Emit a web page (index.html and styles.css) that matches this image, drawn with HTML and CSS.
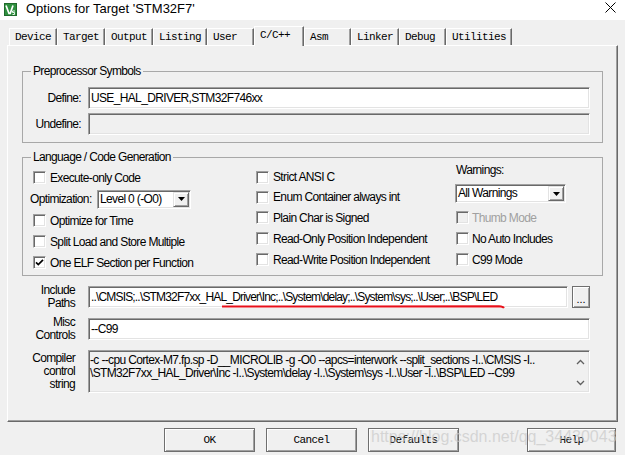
FILE: index.html
```html
<!DOCTYPE html>
<html lang="en">
<head>
<meta charset="utf-8">
<title>Options for Target 'STM32F7'</title>
<link rel="stylesheet" href="styles.css">
</head>
<body>
<div class="window">
  <div class="titlebar">
    <svg class="appicon" width="13" height="13" viewBox="0 0 13 13">
      <rect x="0" y="0" width="13" height="13" fill="#2f8f3f"/>
      <rect x="0.5" y="0.5" width="12" height="12" fill="none" stroke="#1f6a2b"/>
      <path d="M2 2.5 L5 10.5 L6.2 10.5 L9 2.5" fill="none" stroke="#fff" stroke-width="1.7"/>
      <path d="M8.5 8 H11 M8.5 8 V9.5 H10.5 V11.5 H8.5" fill="none" stroke="#fff" stroke-width="0.9"/>
    </svg>
    <span class="title">Options for Target 'STM32F7'</span>
    <svg class="close" width="11" height="11" viewBox="0 0 11 11">
      <path d="M0.5 0.5 L10.5 10.5 M10.5 0.5 L0.5 10.5" stroke="#000" stroke-width="1" fill="none"/>
    </svg>
  </div>

  <div class="tabs">
    <div class="tab">Device</div>
    <div class="tab">Target</div>
    <div class="tab">Output</div>
    <div class="tab">Listing</div>
    <div class="tab">User</div>
    <div class="tab active">C/C++</div>
    <div class="tab">Asm</div>
    <div class="tab">Linker</div>
    <div class="tab">Debug</div>
    <div class="tab">Utilities</div>
  </div>

  <div class="panel">
    <fieldset class="group pre">
      <legend>Preprocessor Symbols</legend>
      <div class="form">
        <label class="lbl">Define:</label>
        <div class="edit">USE_HAL_DRIVER,STM32F746xx</div>
        <label class="lbl">Undefine:</label>
        <div class="edit disabled"></div>
      </div>
    </fieldset>

    <fieldset class="group lang">
      <legend>Language / Code Generation</legend>
      <div class="cols">
        <div class="col col1">
          <div class="chk"><span class="box"></span>Execute-only Code</div>
          <div class="optrow">
            <span class="optlabel">Optimization:</span>
            <div class="combo optcombo">
              <span class="val">Level 0 (-O0)</span>
              <span class="drop"><svg width="7" height="4" viewBox="0 0 7 4"><path d="M0 0 H7 L3.5 4 Z" fill="#000"/></svg></span>
            </div>
          </div>
          <div class="chk"><span class="box"></span>Optimize for Time</div>
          <div class="chk"><span class="box"></span>Split Load and Store Multiple</div>
          <div class="chk"><span class="box"><svg width="9" height="9" viewBox="0 0 9 9"><path d="M1 4.3 L3.3 6.6 L8 1.8" fill="none" stroke="#000" stroke-width="1.7"/></svg></span>One ELF Section per Function</div>
        </div>
        <div class="col col2">
          <div class="chk short"><span class="box"></span>Strict ANSI C</div>
          <div class="chk short"><span class="box"></span>Enum Container always int</div>
          <div class="chk"><span class="box"></span>Plain Char is Signed</div>
          <div class="chk"><span class="box"></span>Read-Only Position Independent</div>
          <div class="chk"><span class="box"></span>Read-Write Position Independent</div>
        </div>
        <div class="col col3">
          <div class="wlabel">Warnings:</div>
          <div class="combo warncombo">
            <span class="val">All Warnings</span>
            <span class="drop"><svg width="7" height="4" viewBox="0 0 7 4"><path d="M0 0 H7 L3.5 4 Z" fill="#000"/></svg></span>
          </div>
          <div class="chk disabled first"><span class="box"></span>Thumb Mode</div>
          <div class="chk"><span class="box"></span>No Auto Includes</div>
          <div class="chk"><span class="box"></span>C99 Mode</div>
        </div>
      </div>
    </fieldset>

    <div class="paths">
      <div class="plabel">Include<br>Paths</div>
      <div class="inc">
        <div class="edit tight">..\CMSIS;..\STM32F7xx_HAL_Driver\Inc;..\System\delay;..\System\sys;..\User;..\BSP\LED</div>
        <div class="browse">...</div>
      </div>
      <div class="plabel">Misc<br>Controls</div>
      <div class="edit">--C99</div>
      <div class="plabel">Compiler<br>control<br>string</div>
      <div class="memo">
        <div class="memo-text">-c --cpu Cortex-M7.fp.sp -D__MICROLIB -g -O0 --apcs=interwork --split_sections -I..\CMSIS -I..<br>\STM32F7xx_HAL_Driver\Inc -I..\System\delay -I..\System\sys -I..\User -I..\BSP\LED --C99</div>
        <div class="vscroll">
          <svg width="9" height="6" viewBox="0 0 9 6"><path d="M1 5 L4.5 1.5 L8 5" fill="none" stroke="#606060" stroke-width="1.3"/></svg>
          <svg width="9" height="6" viewBox="0 0 9 6"><path d="M1 1 L4.5 4.5 L8 1" fill="none" stroke="#606060" stroke-width="1.3"/></svg>
        </div>
      </div>
    </div>
  </div>

  <div class="buttons">
    <button class="btn">OK</button>
    <button class="btn">Cancel</button>
    <button class="btn">Defaults</button>
    <button class="btn help">Help</button>
  </div>

  <svg class="annotation" width="625" height="455" viewBox="0 0 625 455">
    <path d="M222 306.5 C 300 307.3, 420 306, 499 306.3 Q 503 306.6 504 308" fill="none" stroke="#e8101a" stroke-width="2"/>
  </svg>
  <div class="watermark">https://blog.csdn.net/qq_34430043</div>
</div>
</body>
</html>
```

FILE: styles.css
```css
* { box-sizing: border-box; }
html, body { margin: 0; padding: 0; }
body {
  width: 625px;
  height: 455px;
  overflow: hidden;
  background: #f0f0f0;
  font-family: "Liberation Sans", Arial, sans-serif;
  font-size: 12px;
  letter-spacing: -0.65px;
  color: #000;
}
.window { position: relative; width: 625px; height: 455px; }

/* title bar */
.titlebar {
  height: 20px;
  background: #fff;
  display: flex;
  align-items: center;
  padding-left: 4px;
}
.appicon { display: block; margin-right: 9px; margin-top: -2px; }
.title {
  font-size: 13px;
  letter-spacing: 0;
  line-height: 20px;
  margin-top: -2px;
}
.close { display: block; margin-left: auto; margin-right: 9px; margin-top: -5px; }

/* tabs */
.tabs {
  height: 25px;
  display: flex;
  align-items: flex-end;
  padding-left: 9px;
  font-family: "Liberation Mono", "Courier New", monospace;
  font-size: 11px;
  letter-spacing: -0.6px;
}
.tab {
  height: 17px;
  min-width: 47px;
  padding: 2px 5px 0 5px;
  line-height: 13px;
  border-top: 1px solid #fff;
  border-left: 1px solid #fff;
  border-right: 1px solid #696969;
  box-shadow: inset -1px 0 0 #a0a0a0;
  white-space: nowrap;
}
.tab.active {
  height: 20px;
  min-width: 50px;
  margin-bottom: -1px;
  position: relative;
  z-index: 1;
  background: #f0f0f0;
  padding-top: 2px;
}

/* tab page */
.panel {
  margin-left: 7px;
  width: 611px;
  height: 377px;
  border-top: 1px solid #fff;
  border-left: 1px solid #fff;
  border-right: 1px solid #696969;
  border-bottom: 1px solid #696969;
  box-shadow: inset -1px -1px 0 #a0a0a0;
  padding-top: 18px;
}

.group {
  margin: 0 0 0 14px;
  width: 581px;
  padding: 0;
  border: 1px solid #a8a8a8;
  min-width: 0;
}
.group legend {
  margin-left: 8px;
  padding: 0 2px;
  line-height: 14px;
}
.lang { margin-top: 7px; }

.form {
  display: grid;
  grid-template-columns: 58px 502px;
  grid-auto-rows: 22px;
  column-gap: 7px;
  row-gap: 4px;
  padding: 9px 0 7px 0;
}
.lbl { text-align: right; align-self: center; }

.edit {
  height: 22px;
  background: #fff;
  border: 1px solid;
  border-color: #a0a0a0 #fff #fff #a0a0a0;
  box-shadow: inset 1px 1px 0 #696969, inset -1px -1px 0 #e3e3e3;
  padding: 0 0 0 2px;
  line-height: 20px;
  white-space: nowrap;
  overflow: hidden;
}
.edit.tight { letter-spacing: -0.83px; }
.edit.disabled { background: #f0f0f0; }

/* language group */
.cols { display: flex; padding: 3px 0 2px 7px; }
.col { display: flex; flex-direction: column; }
.col1 { width: 226px; }
.col2 { width: 199px; }
.col3 { flex: 1; }

.chk { display: flex; align-items: center; height: 21px; white-space: nowrap; }
.col1 .chk { padding-left: 3px; }
.chk.short { height: 20px; }
.box {
  width: 13px;
  height: 13px;
  flex: none;
  margin-right: 4px;
  background: #fff;
  border: 1px solid;
  border-color: #a0a0a0 #fff #fff #a0a0a0;
  box-shadow: inset 1px 1px 0 #696969, inset -1px -1px 0 #e3e3e3;
  display: flex;
  align-items: center;
  justify-content: center;
}
.box svg { display: block; }
.chk.disabled { color: #a0a0a0; }
.chk.disabled .box { background: #f0f0f0; }
.col3 .box { margin-right: 3px; }

.optrow { display: flex; align-items: center; height: 22px; }
.optlabel { width: 67px; }

.combo {
  display: flex;
  align-items: center;
  height: 19px;
  background: #fff;
  border: 1px solid;
  border-color: #a0a0a0 #fff #fff #a0a0a0;
  box-shadow: inset 1px 1px 0 #696969, inset -1px -1px 0 #e3e3e3;
  padding: 0 1px 0 2px;
}
.combo .val { flex: 1; white-space: nowrap; line-height: 15px; }
.optcombo { width: 94px; }
.warncombo { width: 111px; margin-top: 7px; }
.drop {
  width: 16px;
  height: 15px;
  background: #f0f0f0;
  border: 1px solid;
  border-color: #e3e3e3 #696969 #696969 #e3e3e3;
  box-shadow: inset 1px 1px 0 #fff, inset -1px -1px 0 #a0a0a0;
  display: flex;
  align-items: center;
  justify-content: center;
}
.drop svg { display: block; }
.wlabel { height: 14px; line-height: 14px; margin-top: -4px; padding-left: 1px; }
.col3 .chk { padding-left: 1px; }
.col3 .chk.first { margin-top: 4px; }

/* lower rows */
.paths {
  display: grid;
  grid-template-columns: 67px 502px;
  grid-template-rows: 22px 22px 43px;
  column-gap: 13px;
  row-gap: 10px;
  margin-top: 10px;
}
.plabel { text-align: right; line-height: 13px; align-self: center; }
.inc { display: flex; gap: 4px; }
.inc .edit { flex: 1; }
.browse {
  width: 18px;
  height: 22px;
  background: #f0f0f0;
  border: 1px solid #6f6f6f;
  box-shadow: inset 1px 1px 0 #fff, inset -1px -1px 0 #a0a0a0;
  text-align: center;
  line-height: 24px;
  font-size: 11px;
  letter-spacing: 0;
}
.memo {
  display: flex;
  background: #f0f0f0;
  border: 1px solid;
  border-color: #a0a0a0 #fff #fff #a0a0a0;
  box-shadow: inset 1px 1px 0 #696969, inset -1px -1px 0 #e3e3e3;
}
.memo-text {
  flex: 1;
  padding: 3px 0 0 1px;
  line-height: 13px;
  white-space: nowrap;
  overflow: hidden;
}
.vscroll {
  width: 18px;
  display: flex;
  flex-direction: column;
  justify-content: space-between;
  align-items: center;
  padding: 8px 0 6px 0;
}
.vscroll svg { display: block; }

/* buttons */
.buttons {
  display: flex;
  gap: 11px;
  padding-left: 164px;
  margin-top: 6px;
}
.btn {
  width: 91px;
  height: 24px;
  margin: 0;
  padding: 0;
  background: #f0f0f0;
  border: 1px solid #6f6f6f;
  box-shadow: inset 1px 1px 0 #fff, inset -1px -1px 0 #a0a0a0;
  font-family: "Liberation Mono", "Courier New", monospace;
  font-size: 11px;
  letter-spacing: -0.6px;
  color: #000;
}
.btn.help { margin-left: 57px; width: 89px; }

/* overlays */
.annotation { position: absolute; left: 0; top: 0; pointer-events: none; }
.watermark {
  position: absolute;
  left: 371px;
  top: 428px;
  font-size: 16px;
  letter-spacing: 0;
  color: rgba(200, 200, 200, 0.7);
  white-space: nowrap;
  pointer-events: none;
}
```
